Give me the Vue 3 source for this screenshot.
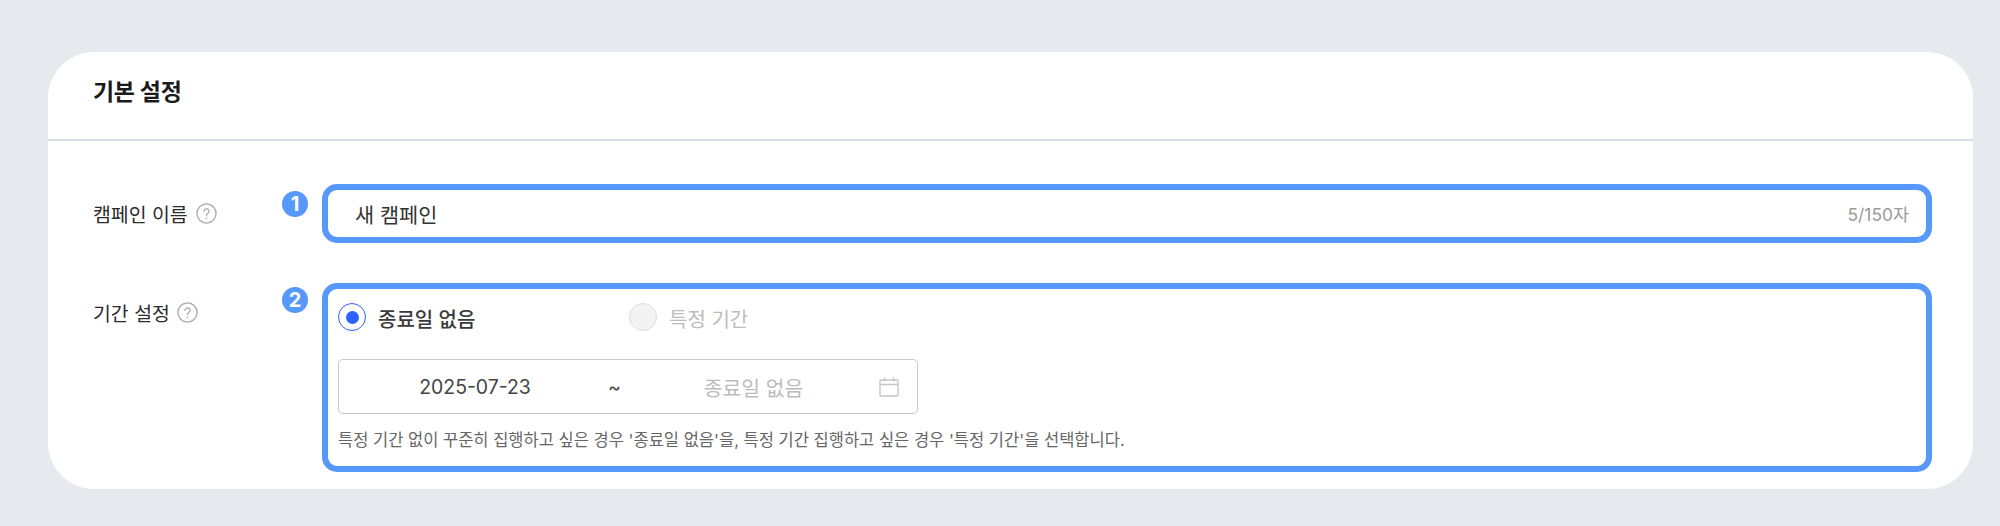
<script setup>
const nameValue = '새 캠페인'
const maxLength = 150
</script>

<template>
  <div class="page">
    <div class="card">
      <div class="cardHeader">기본 설정</div>
      <div class="cardBody">
        <div class="row">
          <div class="labelCell">
            <span>캠페인 이름</span>
            <svg class="helpIcon" viewBox="0 0 21 21" fill="none">
              <circle cx="10.5" cy="10.5" r="9.6" stroke="#a8a8a8" stroke-width="1.3" />
              <path d="M7.9 8.4c0-1.5 1.1-2.5 2.6-2.5s2.6 1 2.6 2.3c0 1-.5 1.6-1.4 2.2-.9.6-1.2 1-1.2 1.9v.4" stroke="#a8a8a8" stroke-width="1.2" stroke-linecap="round" />
              <circle cx="10.5" cy="15.2" r=".8" fill="#a8a8a8" />
            </svg>
          </div>
          <div class="fieldCell">
            <span class="badge">1</span>
            <div class="outlined nameField">
              <span class="nameValue">{{ nameValue }}</span>
              <span class="counter">{{ nameValue.length }}/{{ maxLength }}자</span>
            </div>
          </div>
        </div>
        <div class="row">
          <div class="labelCell labelCellPeriod">
            <span>기간 설정</span>
            <svg class="helpIcon" viewBox="0 0 21 21" fill="none">
              <circle cx="10.5" cy="10.5" r="9.6" stroke="#a8a8a8" stroke-width="1.3" />
              <path d="M7.9 8.4c0-1.5 1.1-2.5 2.6-2.5s2.6 1 2.6 2.3c0 1-.5 1.6-1.4 2.2-.9.6-1.2 1-1.2 1.9v.4" stroke="#a8a8a8" stroke-width="1.2" stroke-linecap="round" />
              <circle cx="10.5" cy="15.2" r=".8" fill="#a8a8a8" />
            </svg>
          </div>
          <div class="fieldCell">
            <span class="badge badgeTwo">2</span>
            <div class="outlined periodField">
              <div class="radioRow">
                <div class="radioItem">
                  <span class="radio checked"></span>
                  <span class="radioText">종료일 없음</span>
                </div>
                <div class="radioItem disabled">
                  <span class="radio"></span>
                  <span class="radioText">특정 기간</span>
                </div>
              </div>
              <div class="dateBox">
                <span class="dateStart">2025-07-23</span>
                <span class="dateTilde">~</span>
                <span class="dateEnd">종료일 없음</span>
                <svg class="calendar" viewBox="0 0 20 20" fill="none" stroke="#c4c4c4" stroke-width="1.3">
                  <rect x="1" y="3" width="18" height="16" rx="1" />
                  <path d="M1 7.5h18M5.5 .5v4M14.5 .5v4" />
                </svg>
              </div>
              <div class="helpText">특정 기간 없이 꾸준히 집행하고 싶은 경우 '종료일 없음'을, 특정 기간 집행하고 싶은 경우 '특정 기간'을 선택합니다.</div>
            </div>
          </div>
        </div>
      </div>
    </div>
  </div>
</template>

<style>
  body {
    background: #e6e9ee;
  }
</style>

<style scoped>
  .page {
    height: 526px;
    box-sizing: border-box;
    padding: 52px 27px 37px 48px;
    background: #e6e9ee;
    font-family: Inter, "Noto Sans CJK KR", sans-serif;
  }
  .card {
    height: 437px;
    background: #fff;
    border-radius: 46px;
  }
  .cardHeader {
    height: 89px;
    box-sizing: border-box;
    padding: 0 45px 12px;
    display: flex;
    align-items: center;
    font-size: 23px;
    font-weight: 700;
    letter-spacing: -0.3px;
    color: #1b1b1b;
    border-bottom: 2px solid #d8dcde;
  }
  .cardBody {
    padding: 43px 41px 17px 45px;
    display: flex;
    flex-direction: column;
    gap: 40px;
  }
  .row {
    display: flex;
  }
  .labelCell {
    width: 229px;
    flex: none;
    height: 59px;
    display: flex;
    align-items: center;
    gap: 8px;
    font-size: 19.4px;
    color: #2b2b2b;
  }
  .labelCellPeriod {
    height: 58px;
    gap: 7px;
  }
  .helpIcon {
    width: 21px;
    height: 21px;
  }
  .fieldCell {
    flex: 1;
    position: relative;
  }
  .badge {
    position: absolute;
    left: -40px;
    top: 7px;
    width: 26px;
    height: 26px;
    border-radius: 50%;
    background: #5798fb;
    color: #fff;
    font-size: 20px;
    font-weight: 700;
    line-height: 26px;
    text-align: center;
  }
  .badgeTwo {
    top: 4px;
  }
  .outlined {
    box-sizing: border-box;
    border: 6px solid #5798fb;
    border-radius: 15px;
  }
  .nameField {
    height: 59px;
    padding: 0 17px 0 27px;
    display: flex;
    justify-content: space-between;
    align-items: center;
  }
  .nameValue {
    font-size: 20.8px;
    color: #333;
  }
  .counter {
    font-size: 17.4px;
    color: #9b9b9b;
  }
  .periodField {
    height: 189px;
    padding: 14px 10px 13px;
  }
  .radioRow {
    display: flex;
    height: 28px;
  }
  .radioItem {
    width: 291px;
    display: flex;
    align-items: center;
    gap: 12px;
    font-size: 20px;
    font-weight: 500;
    color: #3a3a3a;
  }
  .radioItem.disabled {
    font-weight: 400;
    color: #bcbcbc;
  }
  .radioText {
    position: relative;
    top: 1px;
  }
  .radio {
    width: 28px;
    height: 28px;
    box-sizing: border-box;
    border-radius: 50%;
    border: 1.5px solid #dcdcdc;
    background: #f3f3f3;
    display: flex;
    align-items: center;
    justify-content: center;
  }
  .radio.checked {
    border-color: #2f62fb;
    background: #fff;
  }
  .radio.checked::after {
    content: "";
    width: 13px;
    height: 13px;
    border-radius: 50%;
    background: #2f62fb;
  }
  .dateBox {
    position: relative;
    margin-top: 28px;
    width: 580px;
    height: 55px;
    box-sizing: border-box;
    border: 1px solid #c8c8c8;
    border-radius: 5px;
    display: flex;
    align-items: center;
    font-size: 19.4px;
    color: #444;
  }
  .dateStart {
    width: 272px;
    text-align: center;
  }
  .dateTilde {
    width: 12px;
    margin-left: -3px;
    text-align: center;
  }
  .dateEnd {
    width: 267px;
    text-align: center;
    font-size: 20.4px;
    color: #bcbcbc;
  }
  .calendar {
    position: absolute;
    right: 18px;
    top: 17px;
    width: 20px;
    height: 20px;
  }
  .helpText {
    margin-top: 15px;
    line-height: 22px;
    font-size: 16.5px;
    color: #666;
    white-space: nowrap;
  }
</style>
